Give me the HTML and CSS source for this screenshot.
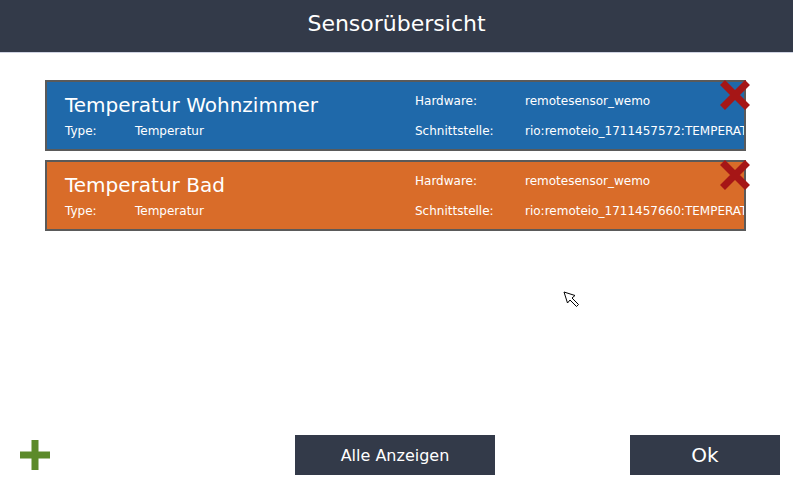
FILE: index.html
```html
<!DOCTYPE html>
<html lang="de">
<head>
<meta charset="utf-8">
<title>Sensorübersicht</title>
<link rel="stylesheet" href="styles.css">
</head>
<body>
<div class="app">
  <header class="titlebar">Sensorübersicht</header>
  <main class="list">
    <div class="sensor">
      <div class="card blue">
        <div class="col-main">
          <div class="name">Temperatur Wohnzimmer</div>
          <div class="row"><span class="lbl">Type:</span><span>Temperatur</span></div>
        </div>
        <div class="col-info">
          <div class="row"><span class="lbl2">Hardware:</span><span>remotesensor_wemo</span></div>
          <div class="row"><span class="lbl2">Schnittstelle:</span><span>rio:remoteio_1711457572:TEMPERATURE</span></div>
        </div>
      </div>
      <svg class="del" viewBox="0 0 30 30" width="30" height="30"><path d="M2.5 2.5 L27.5 27.5 M27.5 2.5 L2.5 27.5" /></svg>
    </div>
    <div class="sensor">
      <div class="card orange">
        <div class="col-main">
          <div class="name">Temperatur Bad</div>
          <div class="row"><span class="lbl">Type:</span><span>Temperatur</span></div>
        </div>
        <div class="col-info">
          <div class="row"><span class="lbl2">Hardware:</span><span>remotesensor_wemo</span></div>
          <div class="row"><span class="lbl2">Schnittstelle:</span><span>rio:remoteio_1711457660:TEMPERATURE</span></div>
        </div>
      </div>
      <svg class="del" viewBox="0 0 30 30" width="30" height="30"><path d="M2.5 2.5 L27.5 27.5 M27.5 2.5 L2.5 27.5" /></svg>
    </div>
  </main>
  <footer class="footer">
    <svg class="add" viewBox="0 0 30 30" width="30" height="30"><rect x="11.5" y="0" width="7" height="30"/><rect x="0" y="11.5" width="30" height="7"/></svg>
    <button class="btn btn-all">Alle Anzeigen</button>
    <button class="btn btn-ok">Ok</button>
  </footer>
  <svg class="cursor" viewBox="0 0 17 17" width="17" height="17"><path d="M1 1 L12 4.5 L9 7 L15.5 13.5 L13.5 15.5 L7 9 L4.5 12 Z"/></svg>
</div>
</body>
</html>
```
FILE: styles.css
```css
html, body {
  margin: 0;
  padding: 0;
  background: #ffffff;
}

.app {
  position: relative;
  height: 479px;
  display: flex;
  flex-direction: column;
  font-family: "DejaVu Sans", "Liberation Sans", sans-serif;
  overflow: hidden;
}

.titlebar {
  height: 52px;
  line-height: 48px;
  background: #333a49;
  border-bottom: 1px solid #cfd3e2;
  color: #ffffff;
  font-size: 22px;
  text-align: center;
}

.list {
  flex: 1;
  display: flex;
  flex-direction: column;
  gap: 9px;
  padding: 27px 47px 0 45px;
}

.sensor {
  position: relative;
}

.card {
  height: 67px;
  border: 2px solid #5a5a5a;
  display: flex;
  overflow: hidden;
  white-space: nowrap;
  color: #ffffff;
}

.blue { background: #1f69aa; }
.orange { background: #d96c29; }

.col-main {
  flex: 0 0 350px;
  padding: 11px 0 0 18px;
}

.name {
  font-size: 20px;
  line-height: 24px;
}

.row {
  font-size: 12px;
  line-height: 14px;
  display: flex;
}

.col-main .row {
  margin-top: 7px;
}

.lbl {
  width: 70px;
  flex: 0 0 70px;
}

.col-info {
  padding-top: 12px;
  display: flex;
  flex-direction: column;
  gap: 16px;
}

.lbl2 {
  width: 110px;
  flex: 0 0 110px;
}

.del {
  position: absolute;
  top: 0;
  right: -4px;
  fill: none;
  stroke: #a61616;
  stroke-width: 7;
}

.footer {
  height: 40px;
  display: flex;
  align-items: center;
  padding: 0 13px 4px 20px;
}

.add {
  fill: #5c8a2a;
  flex: 0 0 30px;
}

.btn {
  height: 40px;
  border: none;
  margin: 0;
  padding: 0;
  background: #333a49;
  color: #ffffff;
  font-family: "DejaVu Sans", "Liberation Sans", sans-serif;
  display: flex;
  justify-content: center;
  align-items: center;
}

.btn-all {
  width: 200px;
  margin-left: 245px;
  font-size: 16px;
}

.btn-ok {
  width: 150px;
  margin-left: 135px;
  font-size: 20px;
}

.cursor {
  position: absolute;
  left: 563px;
  top: 291px;
  fill: #ffffff;
  stroke: #000000;
  stroke-width: 1;
}
```
